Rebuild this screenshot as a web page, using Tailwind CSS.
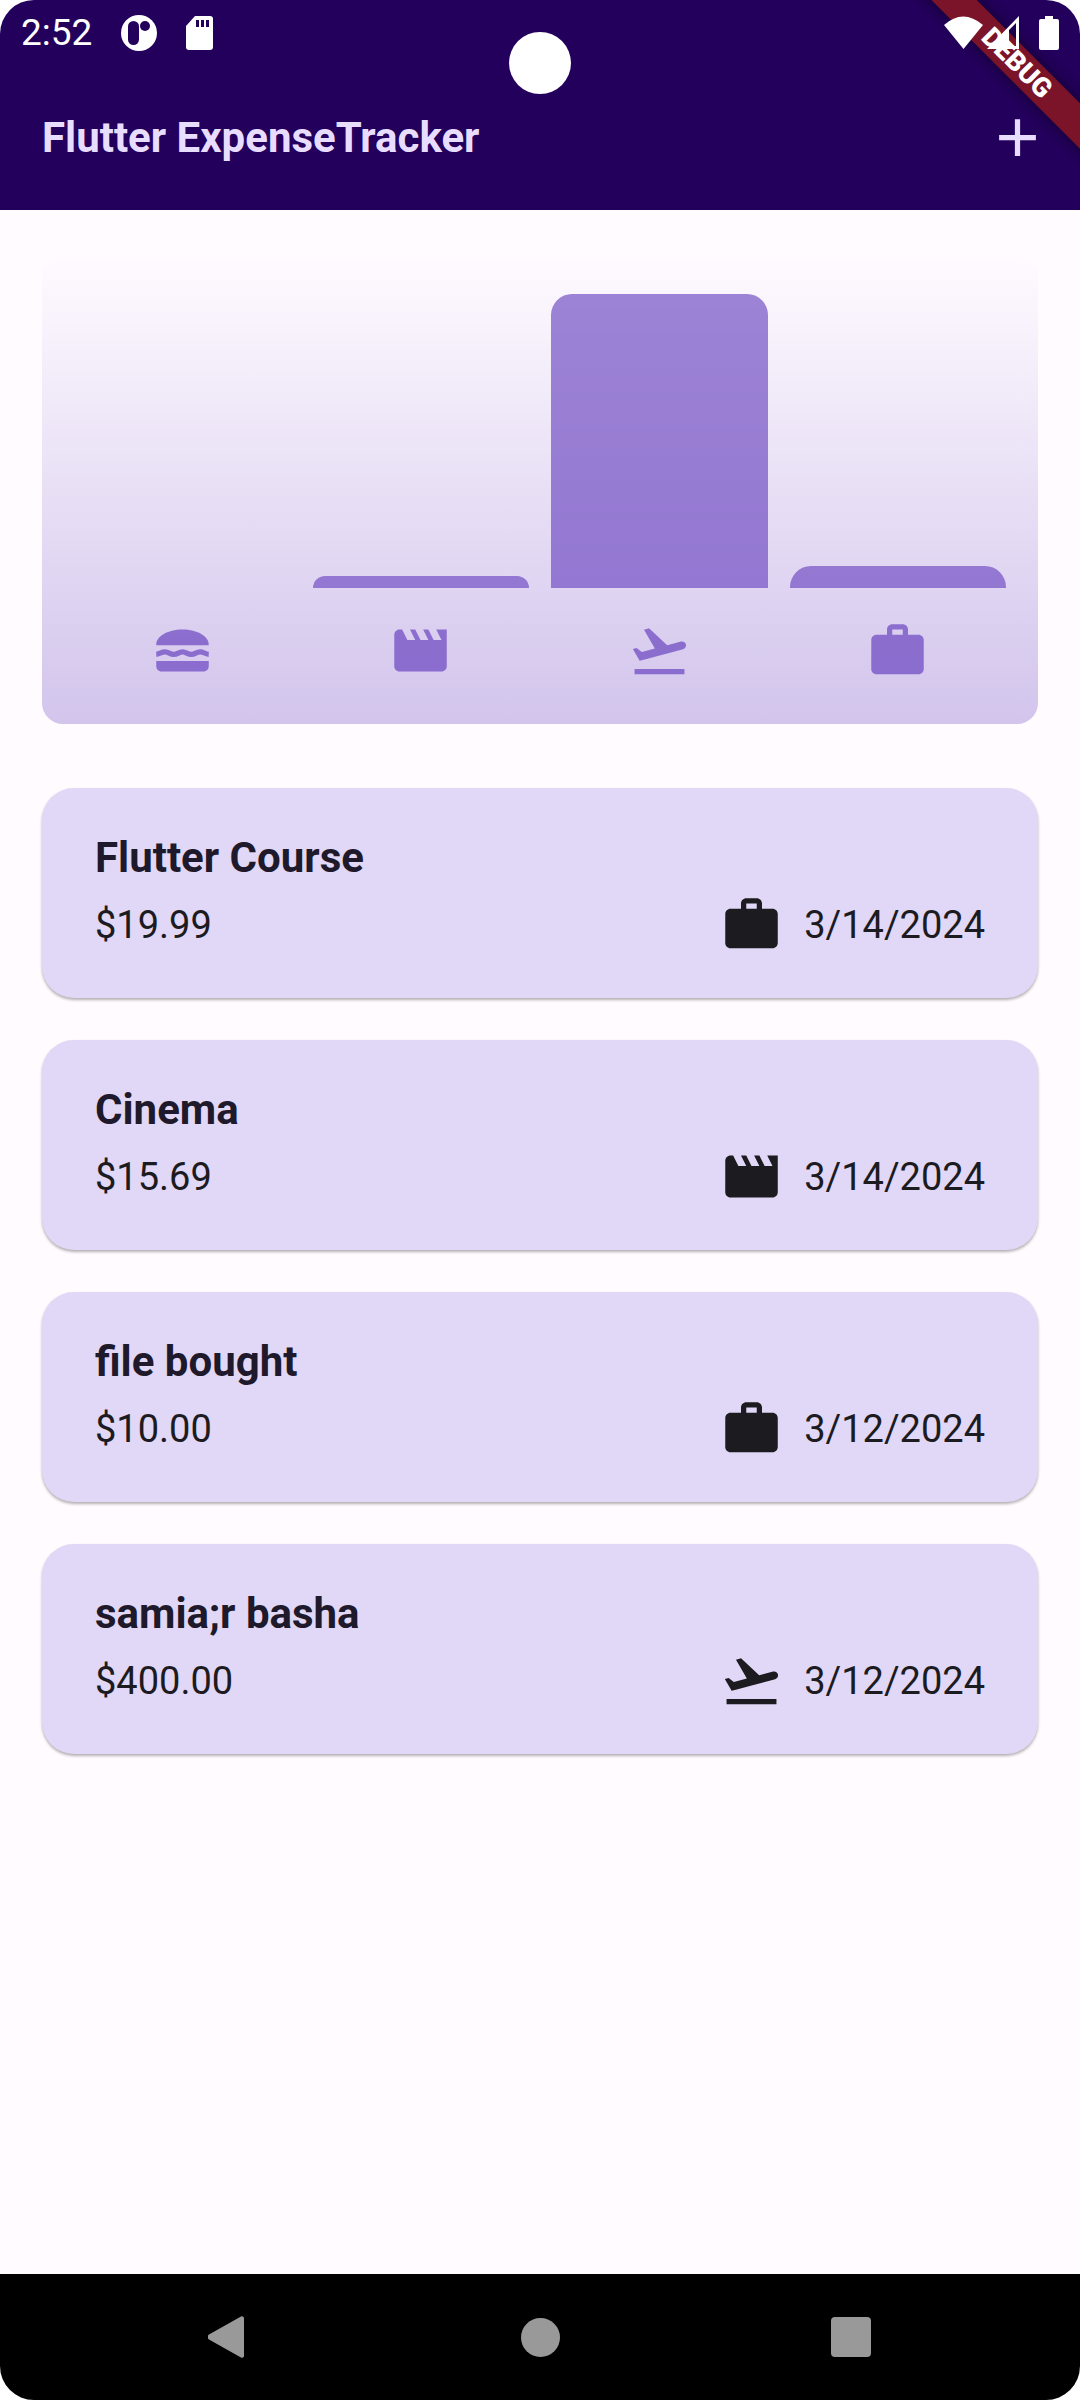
<!DOCTYPE html>
<html lang="en">
<head>
<meta charset="utf-8">
<meta name="viewport" content="width=device-width, initial-scale=1">
<title>Flutter ExpenseTracker</title>
<script src="https://cdn.jsdelivr.net/npm/@tailwindcss/browser@4"></script>
</head>
<body class="bg-white font-['Roboto',sans-serif]">
<svg class="hidden" aria-hidden="true">
  <symbol id="food" viewBox="0 0 24 24"><path fill="currentColor" d="M22 10c.32-3.28-4.28-6-9.99-6S1.7 6.72 2.02 10H22zM2 16h20v2c0 1.1-.9 2-2 2H4c-1.1 0-2-.9-2-2v-2z"/><path fill="none" stroke="currentColor" stroke-width="2" d="M2 13.45c1.6-.1 1.9-.95 3.35-.95s1.8 1 3.33 1 1.87-1 3.33-1 1.8 1 3.33 1 1.87-1 3.33-1 1.8.85 3.33.95"/></symbol>
  <symbol id="movie" viewBox="0 0 24 24"><path fill="currentColor" d="M18 4l2 4h-3l-2-4h-2l2 4h-3l-2-4H8l2 4H7L5 4H4c-1.1 0-1.99.9-1.99 2L2 18c0 1.1.9 2 2 2h16c1.1 0 2-.9 2-2V4h-4z"/></symbol>
  <symbol id="flight" viewBox="0 0 24 24"><path fill="currentColor" d="M2.5 19h19v2h-19zm19.57-9.36c-.21-.8-1.04-1.28-1.84-1.06L14.92 10l-6.9-6.43-1.93.51 4.14 7.17-4.97 1.33-1.97-1.54-1.45.39 1.82 3.16.77 1.33 1.6-.43 5.31-1.42 4.35-1.16L21 11.49c.81-.23 1.28-1.05 1.07-1.85z"/></symbol>
  <symbol id="work" viewBox="0 0 24 24"><path fill="currentColor" d="M20 6h-4V4c0-1.11-.89-2-2-2h-4c-1.11 0-2 .89-2 2v2H4c-1.11 0-1.99.89-1.99 2L2 19c0 1.11.89 2 2 2h16c1.11 0 2-.89 2-2V8c0-1.11-.89-2-2-2zm-6 0h-4V4h4v2z"/></symbol>
</svg>
<div class="relative flex min-h-screen flex-col overflow-hidden rounded-[34px] bg-[#fffbff]">
  <header class="bg-[#23005c] text-[#e9ddff]">
    <div class="absolute top-0 right-0 size-[180px] overflow-hidden">
      <div class="absolute top-[47px] -left-[13px] flex h-8 w-[260px] rotate-45 items-center justify-center bg-[#7b1428] text-[27px] font-black text-white shadow-[0_0_16px_rgba(0,0,0,0.5)]">DEBUG</div>
    </div>
    <div class="absolute top-8 left-1/2 size-[62px] -translate-x-1/2 rounded-full bg-white"></div>
    <div class="relative flex h-[63px] items-center justify-between px-[21px] pt-[2px] text-white">
      <div class="flex items-center gap-[29px]">
        <span class="text-[37px]">2:52</span>
        <svg class="size-9" viewBox="0 0 36 36"><circle cx="18" cy="18" r="18" fill="#fff"/><rect x="7" y="6" width="11" height="24" rx="5.5" fill="#23005c"/><circle cx="24" cy="11" r="5" fill="#23005c"/></svg>
        <svg class="h-[34px] w-[27px]" viewBox="0 0 27 34"><path fill="#fff" d="M9 0h15a3 3 0 0 1 3 3v28a3 3 0 0 1-3 3H3a3 3 0 0 1-3-3V10z"/><path fill="#23005c" d="M10 4h3v7h-3zM15 4h3v7h-3zM20 4h3v7h-3z"/></svg>
      </div>
      <div class="flex items-center">
        <svg class="h-[34px] w-10" viewBox="0 0 40 34"><path fill="#fff" d="M1 9Q20-8 40 9L20.500 33z"/></svg>
        <svg class="mr-5 h-[34px] w-9" viewBox="0 0 36 34"><path fill="#fff" fill-rule="evenodd" d="M36 0v33H4zM26 14v16h7V7z"/></svg>
        <svg class="h-[34px] w-5" viewBox="0 0 20 34"><path fill="#fff" d="M6 0h8v3h4a2 2 0 0 1 2 2v27a2 2 0 0 1-2 2H2a2 2 0 0 1-2-2V5a2 2 0 0 1 2-2h4z"/></svg>
      </div>
    </div>
    <div class="relative flex h-[147px] items-center justify-between pt-[2px] pl-[42px]">
      <h1 class="text-[42px] font-bold">Flutter ExpenseTracker</h1>
      <button type="button" aria-label="Add expense" class="flex size-[126px] items-center justify-center"><svg class="size-[63px]" viewBox="0 0 24 24"><path fill="currentColor" d="M19 13h-6v6h-2v-6H5v-2h6V5h2v6h6z"/></svg></button>
    </div>
  </header>

  <main class="flex flex-1 flex-col gap-16 px-[42px] py-[42px] text-[#1c1b1f]">
    <section aria-label="Expenses by category" class="flex flex-col gap-[31px] rounded-[21px] bg-linear-to-t from-[#6a45c0]/30 to-[#6a45c0]/0 px-[21px] py-[42px]">
      <div class="grid h-[294px] grid-cols-4 items-end">
        <div></div>
        <div class="mx-[11px] rounded-t-[12px] bg-[#6a45c0]/65" style="height:4%"></div>
        <div class="mx-[11px] rounded-t-[21px] bg-[#6a45c0]/65" style="height:100%"></div>
        <div class="mx-[11px] rounded-t-[21px] bg-[#6a45c0]/65" style="height:7.5%"></div>
      </div>
      <div class="grid grid-cols-4 justify-items-center text-[#6a45c0]/70">
        <svg class="size-[63px]"><use href="#food"/></svg>
        <svg class="size-[63px]"><use href="#movie"/></svg>
        <svg class="size-[63px]"><use href="#flight"/></svg>
        <svg class="size-[63px]"><use href="#work"/></svg>
      </div>
    </section>

    <ul class="flex flex-col gap-[42px]">
      <li class="flex flex-col gap-2 rounded-[32px] bg-[#e1d7f6] px-[53px] py-[42px] shadow-[0_2px_3px_rgba(0,0,0,0.3)]">
        <h2 class="text-[42px] leading-[55px] font-bold text-[#1e192b]">Flutter Course</h2>
        <div class="flex items-center justify-between text-[38px]">
          <span class="pt-[2px]">$19.99</span>
          <span class="flex items-center gap-[21px]"><svg class="size-[63px]"><use href="#work"/></svg><time datetime="2024-03-14" class="pt-[2px]">3/14/2024</time></span>
        </div>
      </li>
      <li class="flex flex-col gap-2 rounded-[32px] bg-[#e1d7f6] px-[53px] py-[42px] shadow-[0_2px_3px_rgba(0,0,0,0.3)]">
        <h2 class="text-[42px] leading-[55px] font-bold text-[#1e192b]">Cinema</h2>
        <div class="flex items-center justify-between text-[38px]">
          <span class="pt-[2px]">$15.69</span>
          <span class="flex items-center gap-[21px]"><svg class="size-[63px]"><use href="#movie"/></svg><time datetime="2024-03-14" class="pt-[2px]">3/14/2024</time></span>
        </div>
      </li>
      <li class="flex flex-col gap-2 rounded-[32px] bg-[#e1d7f6] px-[53px] py-[42px] shadow-[0_2px_3px_rgba(0,0,0,0.3)]">
        <h2 class="text-[42px] leading-[55px] font-bold text-[#1e192b]">file bought</h2>
        <div class="flex items-center justify-between text-[38px]">
          <span class="pt-[2px]">$10.00</span>
          <span class="flex items-center gap-[21px]"><svg class="size-[63px]"><use href="#work"/></svg><time datetime="2024-03-12" class="pt-[2px]">3/12/2024</time></span>
        </div>
      </li>
      <li class="flex flex-col gap-2 rounded-[32px] bg-[#e1d7f6] px-[53px] py-[42px] shadow-[0_2px_3px_rgba(0,0,0,0.3)]">
        <h2 class="text-[42px] leading-[55px] font-bold text-[#1e192b]">samia;r basha</h2>
        <div class="flex items-center justify-between text-[38px]">
          <span class="pt-[2px]">$400.00</span>
          <span class="flex items-center gap-[21px]"><svg class="size-[63px]"><use href="#flight"/></svg><time datetime="2024-03-12" class="pt-[2px]">3/12/2024</time></span>
        </div>
      </li>
    </ul>
  </main>

  <nav aria-label="System" class="flex h-[126px] items-center justify-center gap-[185px] bg-black text-[#999]">
    <button type="button" aria-label="Back" class="flex size-[126px] items-center justify-center"><svg class="size-[42px]" viewBox="0 0 42 42"><path fill="currentColor" d="M33 .5a2 2 0 0 1 3 1.500v38a2 2 0 0 1-3 1.500L1 23.500a3 3 0 0 1 0-5z"/></svg></button>
    <button type="button" aria-label="Home" class="flex size-[126px] items-center justify-center"><span class="size-[39px] rounded-full bg-[#999]"></span></button>
    <button type="button" aria-label="Recent apps" class="flex size-[126px] items-center justify-center"><span class="size-10 rounded-[4px] bg-[#999]"></span></button>
  </nav>
</div>
</body>
</html>
